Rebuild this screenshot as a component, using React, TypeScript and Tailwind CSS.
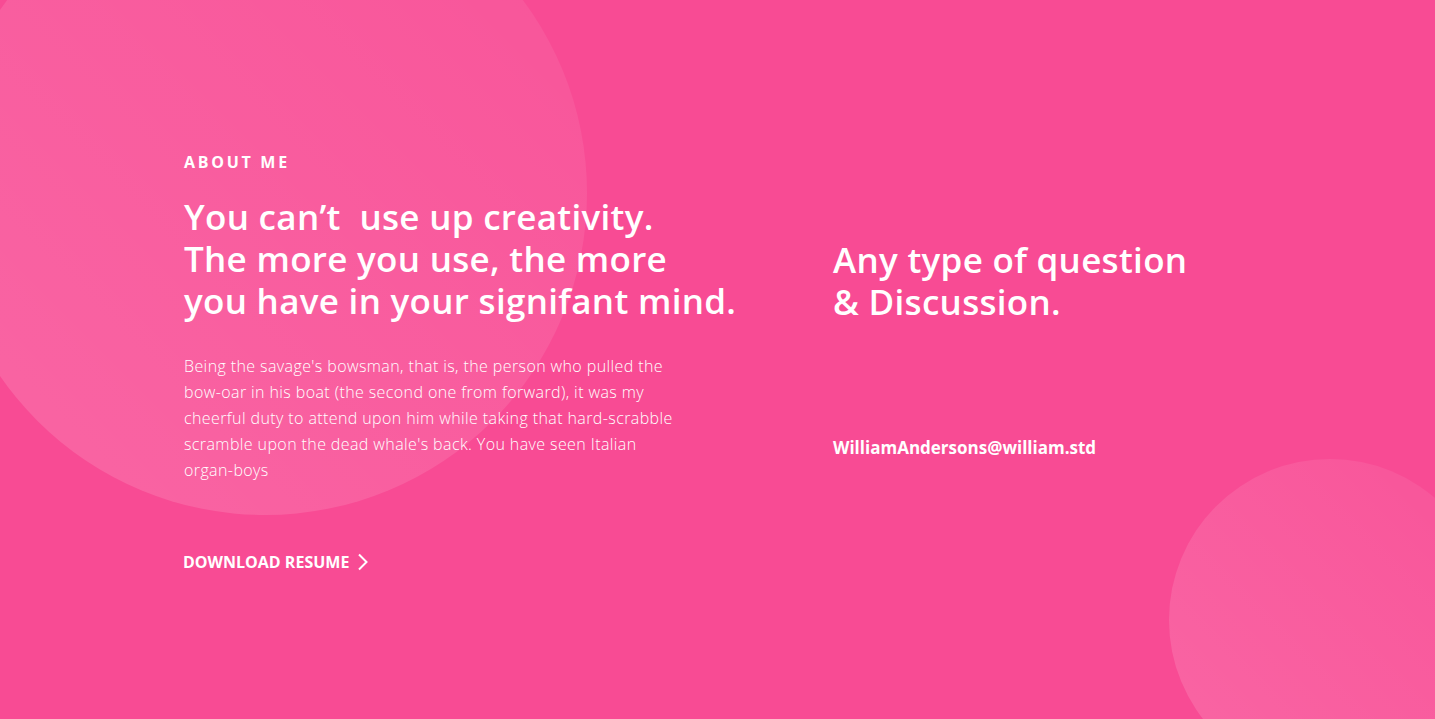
import React from 'react';

const ChevronRight = () => (
    <svg width="12" height="18" viewBox="0 0 12 18" fill="none" stroke="white" strokeWidth="2">
        <path d="M2 1.5 L9.5 9 L2 16.5" />
    </svg>
);

export default function App() {
    return (
        <div
            className="relative w-full h-[719px] overflow-hidden bg-[#f84b94] text-white"
            style={{ fontFamily: '"Open Sans", Lato, sans-serif' }}
        >
            {/* decorative circles */}
            <div className="absolute left-[-57px] top-[-129px] size-[644px] rounded-full bg-gradient-to-tr from-white/15 to-white/5" />
            <div className="absolute left-[1169px] top-[459px] size-[322px] rounded-full bg-gradient-to-tr from-white/15 to-white/5" />

            <div className="relative flex pl-[184px] pt-[151px]">
                <div className="w-[649px] flex flex-col">
                    <p className="text-[16px] font-bold tracking-[0.17em] leading-[22px]">ABOUT ME</p>
                    <h2 className="mt-[23px] text-[35px] font-semibold tracking-[0.3px] leading-[42px]">
                        You can’t&nbsp; use up creativity.
                        <br />
                        The more you use, the more
                        <br />
                        you have in your signifant mind.
                    </h2>
                    <p className="mt-[31px] w-[520px] text-[16px] font-light tracking-[0.4px] leading-[26px] text-white">
                        Being the savage's bowsman, that is, the person who pulled the
                        <br />
                        bow-oar in his boat (the second one from forward), it was my
                        <br />
                        cheerful duty to attend upon him while taking that hard-scrabble
                        <br />
                        scramble upon the dead whale's back. You have seen Italian
                        <br />
                        organ-boys
                    </p>
                    <a className="mt-[68px] flex items-center gap-[8px] text-[16px] font-bold leading-[22px] -ml-px">
                        DOWNLOAD RESUME
                        <ChevronRight />
                    </a>
                </div>

                <div className="flex flex-col pt-[88px]">
                    <h2 className="text-[35px] font-semibold tracking-[0.3px] leading-[42px]">
                        Any type of question
                        <br />
                        &amp; Discussion.
                    </h2>
                    <p className="mt-[113px] text-[17px] font-bold leading-[24px]">WilliamAndersons@william.std</p>
                </div>
            </div>
        </div>
    );
}
